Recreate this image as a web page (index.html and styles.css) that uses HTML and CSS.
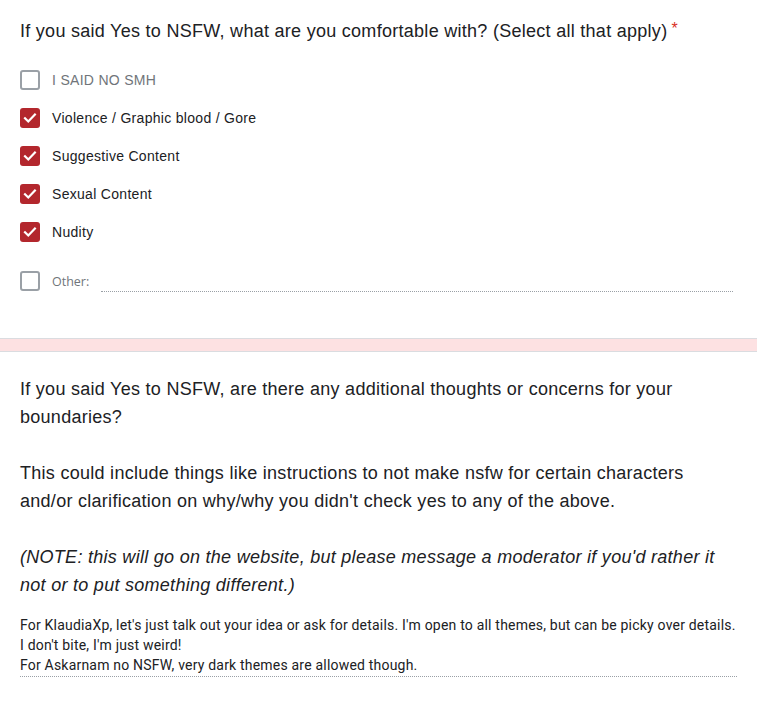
FILE: index.html
```html
<!DOCTYPE html>
<html>
<head>
<meta charset="utf-8">
<link rel="stylesheet" href="styles.css">
</head>
<body>
<div class="card first">
  <div class="title">If you said Yes to NSFW, what are you comfortable with? (Select all that apply)<span class="req">*</span></div>
  <div class="options">
    <div class="opt"><span class="box"></span><span class="label muted">I SAID NO SMH</span></div>
    <div class="opt"><span class="box on"><svg viewBox="0 0 20 20" width="20" height="20"><path d="M5 10.2l3.3 3.3 6.6-7" fill="none" stroke="#fff" stroke-width="2.2" stroke-linecap="square"/></svg></span><span class="label">Violence / Graphic blood / Gore</span></div>
    <div class="opt"><span class="box on"><svg viewBox="0 0 20 20" width="20" height="20"><path d="M5 10.2l3.3 3.3 6.6-7" fill="none" stroke="#fff" stroke-width="2.2" stroke-linecap="square"/></svg></span><span class="label">Suggestive Content</span></div>
    <div class="opt"><span class="box on"><svg viewBox="0 0 20 20" width="20" height="20"><path d="M5 10.2l3.3 3.3 6.6-7" fill="none" stroke="#fff" stroke-width="2.2" stroke-linecap="square"/></svg></span><span class="label">Sexual Content</span></div>
    <div class="opt"><span class="box on"><svg viewBox="0 0 20 20" width="20" height="20"><path d="M5 10.2l3.3 3.3 6.6-7" fill="none" stroke="#fff" stroke-width="2.2" stroke-linecap="square"/></svg></span><span class="label">Nudity</span></div>
    <div class="opt other"><span class="box"></span><span class="other-label">Other:</span><span class="other-line"></span></div>
  </div>
</div>
<div class="band"></div>
<div class="card second">
  <div class="title2">
    <p>If you said Yes to NSFW, are there any additional thoughts or concerns for your boundaries?</p>
    <p class="blank">&nbsp;</p>
    <p>This could include things like instructions to not make nsfw for certain characters and/or clarification on why/why you didn't check yes to any of the above.</p>
    <p class="blank">&nbsp;</p>
    <p class="note">(NOTE: this will go on the website, but please message a moderator if you'd rather it not or to put something different.)</p>
  </div>
  <div class="answer">For KlaudiaXp, let's just talk out your idea or ask for details. I'm open to all themes, but can be picky over details.<br>I don't bite, I'm just weird!<br>For Askarnam no NSFW, very dark themes are allowed though.</div>
</div>
</body>
</html>
```
FILE: styles.css
```css
html, body {
  margin: 0;
  padding: 0;
  background: #fff;
}
body {
  width: 757px;
  font-family: "Liberation Sans", Arial, sans-serif;
  color: #202124;
}
.card {
  padding-left: 20px;
  padding-right: 20px;
}
.first {
  padding-top: 15px;
  height: 321px;
  box-sizing: border-box;
}
.title {
  font-size: 18px;
  line-height: 28px;
  letter-spacing: 0.28px;
}
.req {
  color: #d93025;
  font-size: 16px;
  margin-left: 4px;
  vertical-align: 3px;
}
.options {
  margin-top: 16px;
  display: flex;
  flex-direction: column;
}
.opt {
  display: flex;
  align-items: center;
  height: 38px;
}
.opt.other {
  margin-top: 11px;
}
.box {
  width: 20px;
  height: 20px;
  box-sizing: border-box;
  border: 2px solid #9aa0a6;
  border-radius: 3px;
  flex: none;
  display: block;
}
.box.on {
  border: none;
  background: #b3272d;
}
.box svg {
  display: block;
}
.label {
  margin-left: 12px;
  font-size: 14px;
  letter-spacing: 0.3px;
  color: #202124;
}
.label.muted {
  color: #70757a;
}
.other-label {
  margin-left: 12px;
  font-family: "Open Sans", Roboto, sans-serif;
  font-size: 12.5px;
  color: #70757a;
}
.other-line {
  flex: 1;
  margin-left: 12px;
  margin-right: 4px;
  align-self: flex-end;
  margin-bottom: 8px;
  border-bottom: 1px dotted #9aa0a6;
  height: 0;
}
.band {
  margin-top: 17px;
  height: 12px;
  background: #fde1e2;
  border-top: 1px solid #dadce0;
  border-bottom: 1px solid #dadce0;
}
.second {
  padding-top: 23px;
}
.title2 {
  font-size: 18px;
  line-height: 28px;
  letter-spacing: 0.28px;
}
.title2 p {
  margin: 0;
}
.note {
  font-style: italic;
}
.answer {
  margin-top: 16px;
  font-family: Roboto, sans-serif;
  font-size: 14px;
  letter-spacing: 0.2px;
  line-height: 20px;
  color: #202124;
  border-bottom: 1px dotted #9aa0a6;
  padding-bottom: 1px;
}
```
